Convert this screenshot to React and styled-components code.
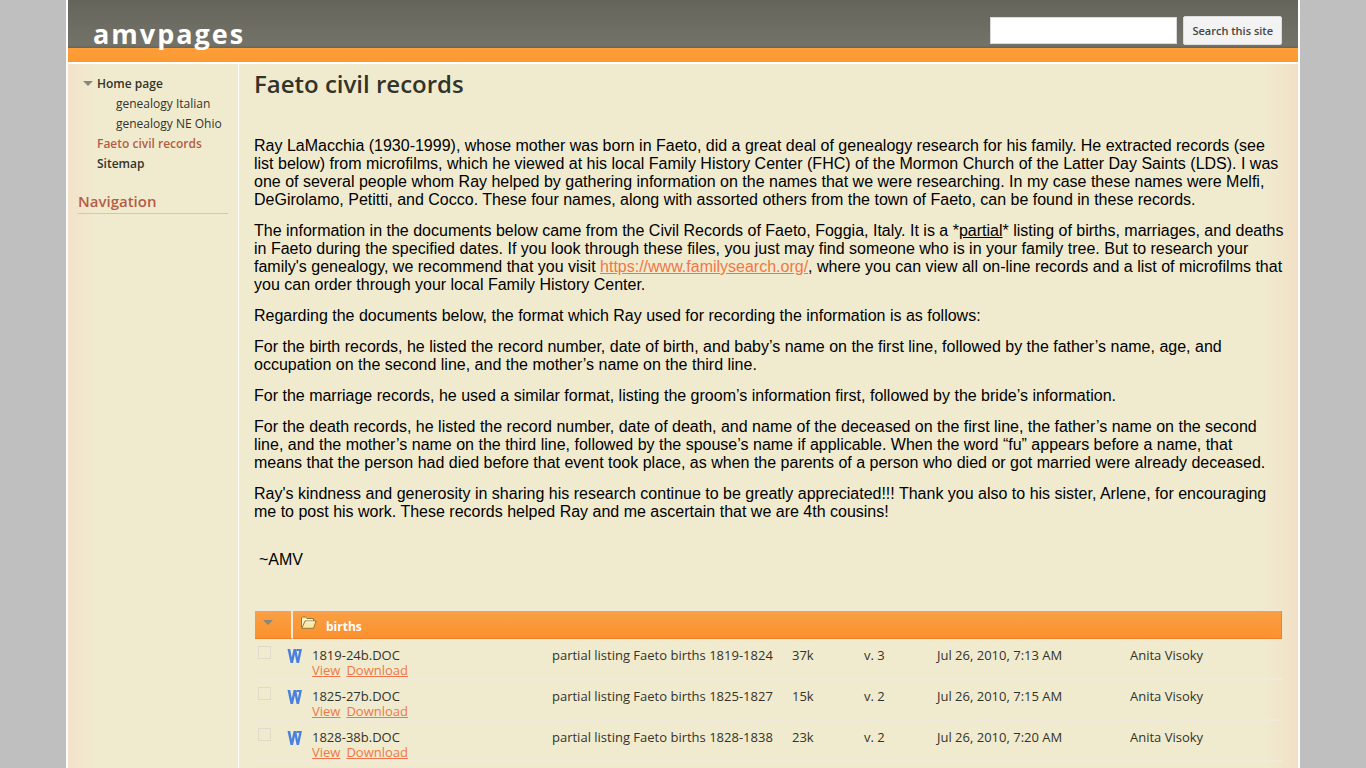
import React, { useState } from 'react';
import styled, { createGlobalStyle } from 'styled-components';

const GlobalStyle = createGlobalStyle`
  body {
    margin: 0;
    background-color: #bfbfbf;
    color: #33332a;
    font-family: "Lucida Grande", "Open Sans", "Noto Sans", sans-serif;
    font-size: 12px;
    line-height: 15px;
  }
  * {
    box-sizing: border-box;
  }
`;

const Page = styled.div`
  min-height: 100vh;
  margin: 0 66px;
  border: solid #ffffff;
  border-width: 0 2px;
  background: #f0ebcf
    linear-gradient(
      to right,
      #f3e2c9 0,
      #f0ebcf 28px,
      #f0ebcf calc(100% - 36px),
      #f2e0c6 100%
    );
`;

const Header = styled.header`
  display: flex;
  justify-content: space-between;
  height: 64px;
  padding: 0 16px 0 25px;
  border-bottom: 2px solid #ffffff;
  background: linear-gradient(
    to bottom,
    #65645a 0,
    #74736a 45px,
    #66655c 48px,
    #ff9e3a 48px,
    #fb9a30 100%
  );
`;

const SiteName = styled.a`
  padding-top: 16px;
  color: #ffffff;
  font-size: 27px;
  font-weight: 700;
  line-height: 36px;
  letter-spacing: 2px;
  text-decoration: none;
`;

const Search = styled.form`
  display: flex;
  align-items: center;
  gap: 6px;
  height: 29px;
  margin-top: 16px;
  font-size: 11px;
  input {
    width: 187px;
    height: 27px;
    padding: 2px 4px;
    border: 1px solid #d9d9d9;
    background-color: #ffffff;
    font: inherit;
  }
  button {
    height: 29px;
    padding: 0 8px;
    border: 1px solid #dcdcdc;
    border-radius: 2px;
    background-color: #f3f3f3;
    color: #444444;
    font: inherit;
    font-weight: 600;
    white-space: nowrap;
  }
`;

const Columns = styled.div`
  display: grid;
  grid-template-columns: 171px minmax(0, 1fr);
  min-height: calc(100vh - 64px);
`;

const Sidebar = styled.nav`
  padding: 9px 10px;
  border-right: 1px solid #ffffff;
  ul {
    margin: 0;
    padding: 0;
    list-style: none;
  }
`;

const NavItem = styled.li`
  display: flex;
  align-items: center;
  gap: 4px;
  height: 20px;
  padding-left: ${props => (props.$sub ? '38px' : props.$open ? '5px' : '19px')};
  white-space: nowrap;
  a {
    color: ${props => (props.$current ? '#b65c45' : '#33332a')};
    font-weight: ${props => (props.$sub ? 400 : 600)};
    text-decoration: none;
  }
`;

const Arrow = styled.span`
  display: inline-block;
  border: solid transparent;
  border-width: 5px 5px 0;
  border-top-color: #87877c;
`;

const SideTitle = styled.h2`
  margin: 18px 0 0;
  padding-bottom: 2px;
  border-bottom: 1px solid #eabf9f;
  color: #b65c45;
  font-size: 15px;
  font-weight: 600;
  line-height: 20px;
`;

const Content = styled.main`
  padding: 5px 14px 0 15px;
`;

const PageTitle = styled.h1`
  margin: 0 0 38px;
  font-size: 24px;
  font-weight: 600;
  line-height: 30px;
`;

const Article = styled.article`
  color: #000000;
  font-family: "Liberation Sans", Arial, sans-serif;
  font-size: 16px;
  line-height: 18px;
  p {
    margin: 0 0 13px;
  }
  a {
    color: #f07746;
  }
`;

const Signature = styled.p`
  && {
    margin: 30px 0 42px;
    padding-left: 5px;
  }
`;

const Files = styled.table`
  width: calc(100% - 3px);
  margin-left: 1px;
  table-layout: fixed;
  border-collapse: separate;
  border-spacing: 0;
  font-size: 13px;
  th {
    height: 28px;
    padding: 0 8px;
    border-bottom: 1px solid #f0802a;
    background: linear-gradient(to bottom, #f9a046, #fb912d);
    box-shadow: 0 -2px 0 #efe8de;
    color: #ffffff;
    font-size: 12px;
    font-weight: 700;
    text-align: left;
    vertical-align: top;
  }
  th:first-child {
    border-right: 2px solid #f0ebdc;
  }
  th:last-child {
    box-shadow: 0 -2px 0 #efe8de, inset -1px 0 0 #f0802a;
  }
  td {
    height: 41px;
    padding: 9px 0 0;
    border-bottom: 2px solid #f0e9dc;
    vertical-align: top;
    white-space: nowrap;
  }
  td a {
    margin-right: 6px;
    color: #f07746;
  }
`;

const Folder = styled.div`
  display: flex;
  align-items: flex-start;
  gap: 9px;
  padding-top: 5px;
  span {
    padding-top: 3px;
  }
`;

const Toggle = styled.button`
  display: block;
  padding: 7px 0 0;
  border: 0;
  background: none;
  line-height: 5px;
`;

const Tick = styled.input`
  display: block;
  appearance: none;
  width: 13px;
  height: 13px;
  margin: 0 0 0 3px;
  border: 1px solid #dfdbcb;
`;

const TickCell = styled.td`
  && {
    padding-top: 7px;
  }
`;

const Icon = styled.svg`
  display: block;
`;

const navigation = [
  { label: 'Home page', open: true },
  { label: 'genealogy Italian', sub: true },
  { label: 'genealogy NE Ohio', sub: true },
  { label: 'Faeto civil records', current: true },
  { label: 'Sitemap' },
];

const files = [
  { name: '1819-24b.DOC', years: '1819-1824', size: '37k', version: 'v. 3', time: '7:13 AM' },
  { name: '1825-27b.DOC', years: '1825-1827', size: '15k', version: 'v. 2', time: '7:15 AM' },
  { name: '1828-38b.DOC', years: '1828-1838', size: '23k', version: 'v. 2', time: '7:20 AM' },
];

const FolderIcon = () => (
  <Icon width="16" height="14" viewBox="0 0 16 14" aria-hidden="true">
    <path
      d="M0.5 11.5V2L1.5 1H4.5L6 2.5H12.5V5"
      fill="#fff6c4"
      stroke="#8f7640"
    />
    <path
      d="M0.8 12.3L4 5H15.2L12.5 12.3Z"
      fill="#fbe9a0"
      stroke="#8f7640"
      strokeLinejoin="round"
    />
    <path d="M4.8 6H13.8" stroke="#fffce6" />
  </Icon>
);

const WordIcon = () => (
  <Icon width="16" height="16" viewBox="0 0 16 16" aria-hidden="true">
    <path
      d="M0.5 1H3.2L4.8 9.5L6.6 1H9.2L10.8 9.5L12.2 3H9.6V1H15L12 15H9.6L7.9 6.5L6 15H3.5Z"
      fill="#4a80e0"
    />
  </Icon>
);

const FileRow = ({ file }) => (
  <tr>
    <TickCell>
      <Tick type="checkbox" aria-label={`Select ${file.name}`} />
    </TickCell>
    <td colSpan={2}>
      <WordIcon />
    </td>
    <td>
      {file.name}
      <br />
      <a href="#view">View</a>
      <a href="#download">Download</a>
    </td>
    <td>partial listing Faeto births {file.years}</td>
    <td>{file.size}</td>
    <td>{file.version}</td>
    <td>Jul 26, 2010, {file.time}</td>
    <td>Anita Visoky</td>
  </tr>
);

const FileTable = () => {
  const [open, setOpen] = useState(true);

  return (
    <Files>
      <colgroup>
        <col width="32" />
        <col width="6" />
        <col width="19" />
        <col width="240" />
        <col width="240" />
        <col width="72" />
        <col width="73" />
        <col width="193" />
        <col />
      </colgroup>
      <thead>
        <tr>
          <th colSpan={2}>
            <Toggle
              type="button"
              aria-label="Toggle births"
              aria-expanded={open}
              onClick={() => setOpen(!open)}>
              <Arrow />
            </Toggle>
          </th>
          <th colSpan={7}>
            <Folder>
              <FolderIcon />
              <span>births</span>
            </Folder>
          </th>
        </tr>
      </thead>
      <tbody>
        {open && files.map(file => <FileRow key={file.name} file={file} />)}
      </tbody>
    </Files>
  );
};

export default function App() {
  return (
    <>
      <GlobalStyle />
      <Page>
        <Header>
          <SiteName href="#home">amvpages</SiteName>
          <Search role="search" onSubmit={e => e.preventDefault()}>
            <input type="text" aria-label="Search this site" />
            <button type="submit">Search this site</button>
          </Search>
        </Header>
        <Columns>
          <Sidebar aria-label="Site">
            <ul>
              {navigation.map(item => (
                <NavItem
                  key={item.label}
                  $open={item.open}
                  $sub={item.sub}
                  $current={item.current}>
                  {item.open && <Arrow />}
                  <a href="#page">{item.label}</a>
                </NavItem>
              ))}
            </ul>
            <SideTitle>Navigation</SideTitle>
          </Sidebar>
          <Content>
            <PageTitle>Faeto civil records</PageTitle>
            <Article>
              <p>
                Ray LaMacchia (1930-1999), whose mother was born in Faeto, did a
                great deal of genealogy research for his family. He extracted
                records (see list below) from microfilms, which he viewed at his
                local Family History Center (FHC) of the Mormon Church of the
                Latter Day Saints (LDS). I was one of several people whom Ray
                helped by gathering information on the names that we were
                researching. In my case these names were Melfi, DeGirolamo,
                Petitti, and Cocco. These four names, along with assorted others
                from the town of Faeto, can be found in these records.
              </p>
              <p>
                The information in the documents below came from the Civil
                Records of Faeto, Foggia, Italy. It is a *<u>partial</u>*
                listing of births, marriages, and deaths in Faeto during the
                specified dates. If you look through these files, you just may
                find someone who is in your family tree. But to research your
                family's genealogy, we recommend that you visit{' '}
                <a href="https://www.familysearch.org/">
                  https://www.familysearch.org/
                </a>
                , where you can view all on-line records and a list of
                microfilms that you can order through your local Family History
                Center.
              </p>
              <p>
                Regarding the documents below, the format which Ray used for
                recording the information is as follows:
              </p>
              <p>
                For the birth records, he listed the record number, date of
                birth, and baby’s name on the first line, followed by the
                father’s name, age, and occupation on the second line, and the
                mother’s name on the third line.
              </p>
              <p>
                For the marriage records, he used a similar format, listing the
                groom’s information first, followed by the bride’s information.
              </p>
              <p>
                For the death records, he listed the record number, date of
                death, and name of the deceased on the first line, the father’s
                name on the second line, and the mother’s name on the third
                line, followed by the spouse’s name if applicable. When the word
                “fu” appears before a name, that means that the person had died
                before that event took place, as when the parents of a person
                who died or got married were already deceased.
              </p>
              <p>
                Ray's kindness and generosity in sharing his research continue
                to be greatly appreciated!!! Thank you also to his sister,
                Arlene, for encouraging me to post his work. These records
                helped Ray and me ascertain that we are 4th cousins!
              </p>
              <Signature>~AMV</Signature>
            </Article>
            <FileTable />
          </Content>
        </Columns>
      </Page>
    </>
  );
}
